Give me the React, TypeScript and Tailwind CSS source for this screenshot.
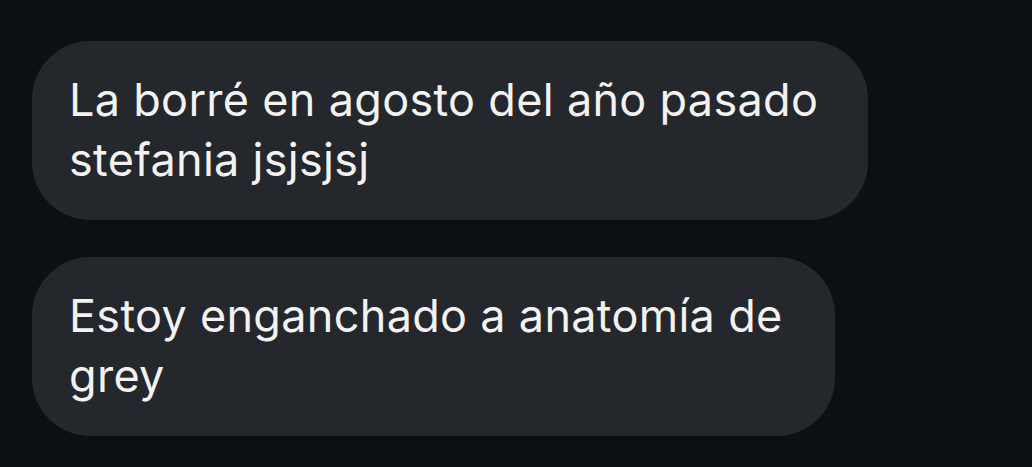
import React from 'react';

export default function App() {
  const messages = [
    { id: 1, text: 'La borré en agosto del año pasado stefania jsjsjsj', width: 'w-[836px]' },
    { id: 2, text: 'Estoy enganchado a anatomía de grey', width: 'w-[803px]' },
  ];

  return (
    <main className="w-[1032px] h-[467px] bg-[#0c0f13] overflow-hidden pt-[41px] pl-[32px] font-['Inter',sans-serif]">
      <div className="flex flex-col gap-[37px]">
        {messages.map((m) => (
          <div
            key={m.id}
            className={`${m.width} h-[179px] rounded-[58px] bg-[#24272b] pl-[37px] pr-[30px] pt-[29px] text-[45px] leading-[60px] text-[#f2f2f2] tracking-[0.3px]`}
          >
            {m.text}
          </div>
        ))}
      </div>
    </main>
  );
}
